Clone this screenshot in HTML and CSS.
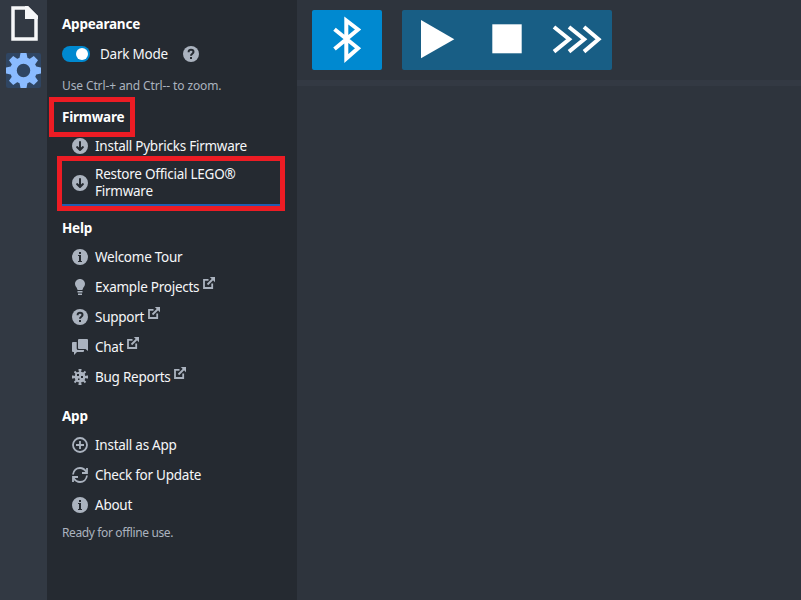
FILE: index.html
```html
<!DOCTYPE html>
<html lang="en">
<head>
<meta charset="utf-8">
<title>Pybricks Code</title>
<link rel="stylesheet" href="styles.css">
</head>
<body>
<svg class="defs" aria-hidden="true">
  <symbol id="download" viewBox="0 0 16 16"><path fill-rule="evenodd" d="M8 0a8 8 0 1 0 0 16A8 8 0 0 0 8 0zM7 4a1 1 0 0 1 2 0v5.6l1.3-1.3a1 1 0 0 1 1.4 1.4l-3 3a1 1 0 0 1-1.4 0l-3-3a1 1 0 0 1 1.4-1.4L7 9.6z"/></symbol>
  <symbol id="info" viewBox="0 0 16 16"><path fill-rule="evenodd" d="M8 0a8 8 0 1 0 0 16A8 8 0 0 0 8 0zM7 3h2v2H7zM6 6h3v6h1v1H6v-1h1V7H6z"/></symbol>
  <symbol id="help" viewBox="0 0 16 16"><circle cx="8" cy="8" r="8"/><path class="cut" d="M5.600 6.200C5.600 4.500 6.600 3.800 8 3.800s2.500.8 2.500 2.200C10.500 7.700 8 7.700 8 9.700"/><path class="hole" d="M7 11h2v2H7z"/></symbol>
  <symbol id="bulb" viewBox="0 0 16 16"><path d="M8 0C5.200 0 3 2.200 3 4.900c0 2.200 1.900 3.300 2.200 5.100q.1 1 .8 1h4q.7 0 .8-1c.3-1.800 2.200-2.900 2.200-5.100C13 2.200 10.800 0 8 0zM5.500 12h5v1.500h-5zM6 14.500h4V16H6z"/></symbol>
  <symbol id="chat" viewBox="0 0 16 16"><path d="M7 0h8q1 0 1 1v11L13.500 10H7q-1 0-1-1V1q0-1 1-1z"/><path d="M1 3h3.700v6.500Q4.700 11 6.200 11H12v1q0 1-1 1H5l-3 3v-3H1q-1 0-1-1V4q0-1 1-1z"/></symbol>
  <symbol id="bug" viewBox="0 0 16 16"><circle cx="8" cy="8" r="5.500"/><path class="line" d="M8 0v16M0 8h16M2.500 2.500l11 11M13.500 2.500l-11 11M6.500 .8h3M6.500 15.200h3M.8 6.500v3M15.200 6.500v3"/><path class="hole" d="M5 5h2v2H5zM9 7h2v2H9zM6 9.500h1.500V11H6z"/></symbol>
  <symbol id="add" viewBox="0 0 16 16"><path class="line" d="M8 4v8M4 8h8"/><circle class="line" cx="8" cy="8" r="7"/></symbol>
  <symbol id="refresh" viewBox="0 0 16 16"><path class="line" d="M1 7.500C1.500 3.500 4.500 1 8 1c2.700 0 4.800 1.400 6.500 4M15 8.500C14.500 12.500 11.500 15 8 15c-2.700 0-4.800-1.400-6.500-4"/><path class="line" d="M15 1v5h-5M1 15v-5h5"/></symbol>
  <symbol id="share" viewBox="0 0 12 12"><path class="line" d="M5.500 2.800H1v8.200h8.200V6.500M4.500 7.500L10.500 1.500"/><path d="M6.800 0H12v5.200z"/></symbol>
</svg>
<div class="app">
  <nav class="activities">
    <div class="activity"><svg class="file" viewBox="0 0 27 35"><path class="page" d="M2 2h14.500L25 10.500V33H2z"/><path class="fold" d="M14 0v13h13v-3L17 0z"/></svg></div>
    <div class="activity selected"><svg class="gear" viewBox="0 0 35 35"><circle cx="17.500" cy="17.500" r="10" fill="none" stroke-width="6.500"/><path d="M14.500 0h6l1.200 6h-8.400zM14.500 35h6l1.200-6h-8.400zM0 14.500v6l6 1.200v-8.400zM35 14.500v6l-6 1.200v-8.400zM3 7.200L7.200 3l5 3.500-5.700 5.700zM32 7.200L27.800 3l-5 3.500 5.700 5.700zM3 27.800L7.200 32l5-3.500-5.700-5.700zM32 27.800L27.800 32l-5-3.500 5.700-5.700z"/></svg></div>
  </nav>
  <aside class="settings">
    <h4>Appearance</h4>
    <div class="mode"><span class="switch"><i></i></span><span class="t mode-label">Dark Mode</span><svg class="icon"><use href="#help"/></svg></div>
    <p class="note zoom-note">Use Ctrl-+ and Ctrl-- to zoom.</p>
    <h4 class="firmware">Firmware<span class="mark"></span></h4>
    <div class="item"><svg class="icon"><use href="#download"/></svg><span class="t">Install Pybricks Firmware</span></div>
    <div class="item restore"><svg class="icon"><use href="#download"/></svg><span class="t">Restore Official LEGO®<br>Firmware</span><span class="mark"></span></div>
    <h4 class="help">Help</h4>
    <div class="item"><svg class="icon"><use href="#info"/></svg><span class="t">Welcome Tour</span></div>
    <div class="item"><svg class="icon"><use href="#bulb"/></svg><span class="t">Example Projects</span><svg class="ext"><use href="#share"/></svg></div>
    <div class="item"><svg class="icon"><use href="#help"/></svg><span class="t">Support</span><svg class="ext"><use href="#share"/></svg></div>
    <div class="item"><svg class="icon"><use href="#chat"/></svg><span class="t">Chat</span><svg class="ext"><use href="#share"/></svg></div>
    <div class="item"><svg class="icon"><use href="#bug"/></svg><span class="t">Bug Reports</span><svg class="ext"><use href="#share"/></svg></div>
    <h4 class="app-title">App</h4>
    <div class="item"><svg class="icon"><use href="#add"/></svg><span class="t">Install as App</span></div>
    <div class="item"><svg class="icon"><use href="#refresh"/></svg><span class="t">Check for Update</span></div>
    <div class="item"><svg class="icon"><use href="#info"/></svg><span class="t">About</span></div>
    <p class="note ready">Ready for offline use.</p>
  </aside>
  <main>
    <div class="toolbar">
      <div class="group connect"><svg viewBox="0 0 70 60"><path class="stroke" d="M22.500 19.300L46 38.300L34.300 48.500V10.500L46 19.500L22.500 39"/></svg></div>
      <div class="group run">
        <svg viewBox="0 0 70 60"><path d="M19 10v38.300L52.300 29.200z"/></svg>
        <svg viewBox="0 0 70 60"><path d="M20.300 14.300h29.400v29H20.300z"/></svg>
        <svg viewBox="0 0 70 60"><path class="stroke" d="M12 17l15.200 12.300L12 41.600M27 17l15.200 12.300L27 41.600M42 17l14.500 12.300L42 41.600"/></svg>
      </div>
    </div>
  </main>
</div>
</body>
</html>
```
FILE: styles.css
```css
* { box-sizing: border-box; }
body { margin: 0; font: 13.500px/17px "Noto Sans", "Open Sans", sans-serif; color: #f6f7f9; }
.defs { position: absolute; width: 0; height: 0; }
.app { display: flex; height: 600px; background: #2e343d; }
.activities { width: 47px; background: #323943; padding: 6px; }
.activity { width: 35px; height: 35px; margin-bottom: 12px; display: flex; justify-content: center; }
.activity svg { width: 27px; height: 35px; }
.activity .file { margin-left: 1px; }
.activity.selected { background: #2f4562; border-radius: 2px; }
.activity .gear { width: 35px; fill: #8abbff; stroke: #8abbff; stroke-width: 0; }
.page { fill: none; stroke: #f6f7f9; stroke-width: 3.500; }
.fold { fill: #f6f7f9; }
.settings { width: 250px; background: #252a31; padding: 10px 12px 0 15px; }
h4 { margin: 0; height: 28px; font-size: 13.500px; line-height: 28px; font-weight: 700; color: #fff; letter-spacing: -0.220px; }
.t { letter-spacing: -0.250px; white-space: nowrap; }
.mode { height: 31px; display: flex; align-items: center; padding-top: 1px; }
.switch { width: 28px; height: 16px; padding: 2px; border-radius: 8px; background: #0089d0; display: flex; justify-content: flex-end; }
.switch i { width: 12px; height: 12px; border-radius: 50%; background: #fff; }
.mode-label { width: 83px; margin-left: 10px; }
.note { margin: 0; font-size: 12px; line-height: 20px; color: #abb3bf; letter-spacing: -0.370px; white-space: nowrap; }
.zoom-note { margin: 7px 0; letter-spacing: -0.120px; font-variant-ligatures: none; }
.item { height: 30px; padding-left: 10px; display: flex; align-items: center; }
.item .t { margin-left: 7px; }
.icon { width: 16px; height: 16px; fill: #abb3bf; flex: none; }
.ext { width: 12px; height: 12px; margin: -8px 0 0 3.600px; fill: #abb3bf; }
.line { fill: none; stroke: #abb3bf; stroke-width: 1.800; }
.ext .line { stroke-width: 1.500; }
.cut { fill: none; stroke: #252a31; stroke-width: 2; }
.hole { fill: #252a31; }
.firmware, .restore { position: relative; }
.restore { height: 46px; margin-bottom: -2px; border-bottom: 3px solid #215db0; margin-left: -1px; padding: 1px 0 0 11px; }
.mark { position: absolute; border: 5px solid #ed1c24; }
.firmware .mark { left: -13px; top: -6px; width: 86px; height: 40px; }
.restore .mark { left: -4px; top: -5px; width: 228px; height: 55px; }
.help { margin-top: 9px; }
.app-title { margin-top: 10px; }
.ready { margin-top: 3px; }
main { flex: 1; }
.toolbar { height: 86px; border-bottom: 6px solid #333943; padding: 10px 15px; display: flex; gap: 20px; }
.group { display: flex; height: 60px; border-radius: 2px; background: #185e85; fill: #fff; }
.connect { background: #0089d0; }
.group svg { width: 70px; height: 60px; }
.stroke { fill: none; stroke: #fff; stroke-width: 4; }
```
